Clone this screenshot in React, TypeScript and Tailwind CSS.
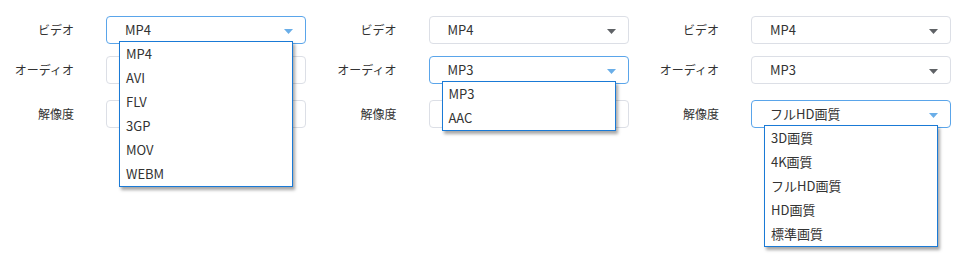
import React from "react";

type Col = {
  video: string;
  audio: string;
  res: string;
  open?: { row: number; items: string[] };
};

const cols: Col[] = [
  { video: "MP4", audio: "", res: "", open: { row: 0, items: ["MP4", "AVI", "FLV", "3GP", "MOV", "WEBM"] } },
  { video: "MP4", audio: "MP3", res: "", open: { row: 1, items: ["MP3", "AAC"] } },
  { video: "MP4", audio: "MP3", res: "フルHD画質", open: { row: 2, items: ["3D画質", "4K画質", "フルHD画質", "HD画質", "標準画質"] } },
];

const labels = ["ビデオ", "オーディオ", "解像度"];

function Arrow({ active }: { active: boolean }) {
  return (
    <svg width="9" height="5" viewBox="0 0 9 5" className="absolute right-[12px] top-[12px]">
      <polygon points="0,0 9,0 4.5,5" fill={active ? "#6aaee8" : "#5f6266"} />
    </svg>
  );
}

function Select({ value, active, items }: { value: string; active: boolean; items?: string[] }) {
  return (
    <div className="relative w-[200px] h-[28px]">
      <div
        className={
          "relative w-full h-full rounded-[4px] border bg-white flex items-center pl-[18px] " +
          (active ? "border-[#5aa5ea]" : "border-[#dcdfe6]")
        }
      >
        <span className="text-[13px] text-[#333]">{value}</span>
        {(value || active) && <Arrow active={active} />}
      </div>
      {items && (
        <div className="absolute left-[13px] top-[25px] z-10 w-[174px] bg-white border-[1.5px] border-[#1a7ad6] shadow-[2px_3px_3px_rgba(0,0,0,0.35)]">
          {items.map((it) => (
            <div key={it} className="h-[24px] flex items-center pl-[6px] text-[13px] text-[#333]">
              {it}
            </div>
          ))}
        </div>
      )}
    </div>
  );
}

export default function App() {
  return (
    <div
      className="w-[967px] h-[266px] bg-white flex"
      style={{ fontFamily: '"Noto Sans CJK JP", "Noto Sans", sans-serif' }}
    >
      {cols.map((c, ci) => {
        const vals = [c.video, c.audio, c.res];
        return (
          <div key={ci} className="w-[322.5px] shrink-0 pt-[16px] flex flex-col">
            {vals.map((v, ri) => (
              <div
                key={ri}
                className={"flex items-center " + (ri === 1 ? "mt-[12px]" : ri === 2 ? "mt-[16px]" : "")}
              >
                <div className="w-[74px] text-right text-[12px] text-[#333] leading-none">{labels[ri]}</div>
                <div className="ml-[32px]">
                  <Select
                    value={v}
                    active={c.open?.row === ri}
                    items={c.open?.row === ri ? c.open.items : undefined}
                  />
                </div>
              </div>
            ))}
          </div>
        );
      })}
    </div>
  );
}
